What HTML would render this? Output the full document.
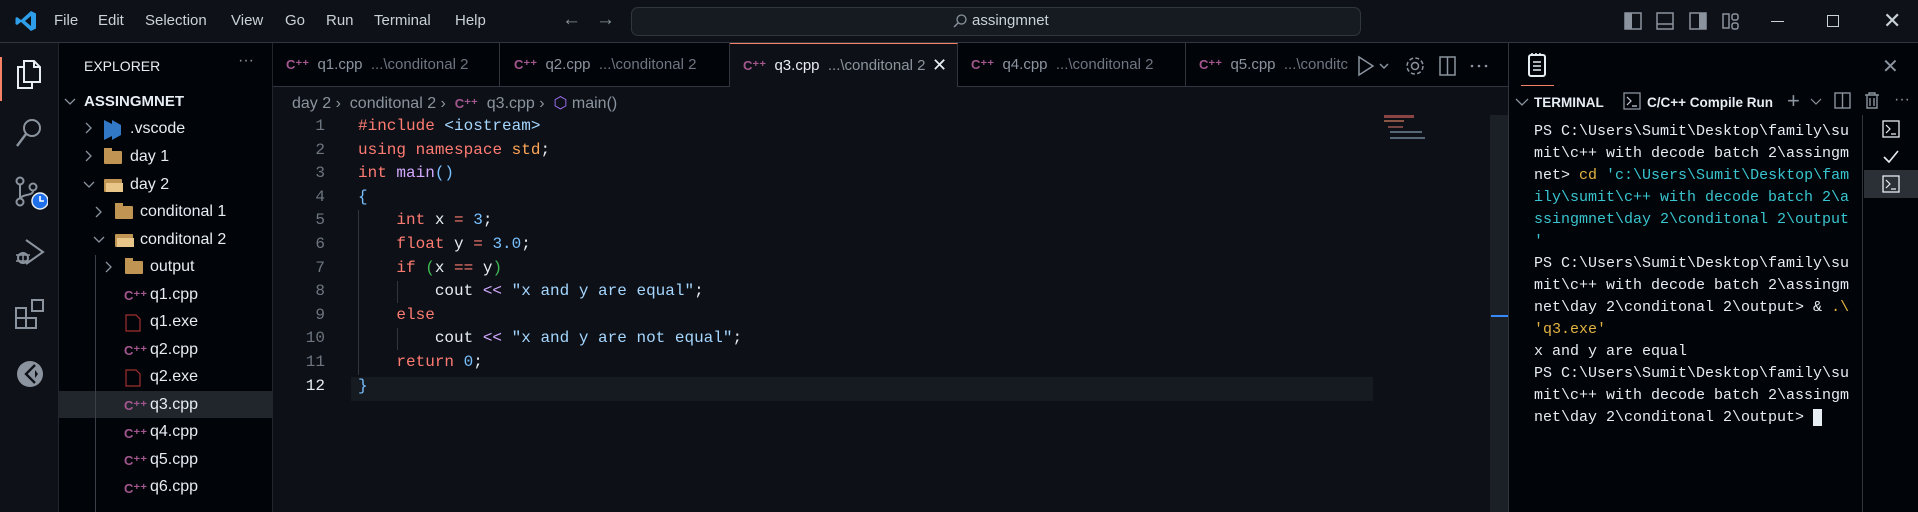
<!DOCTYPE html>
<html><head><meta charset="utf-8"><style>
*{margin:0;padding:0;box-sizing:border-box}
body{width:1918px;height:512px;overflow:hidden;background:#0d1117;font-family:"Liberation Sans",sans-serif;color:#e6edf3;position:relative}
.a{position:absolute;white-space:pre}
.mono{font-family:"Liberation Mono",monospace}
#title{left:0;top:0;width:1918px;height:43px;background:#0e1117;border-bottom:1px solid #30363d}
.menu{top:12px;font-size:15px;color:#c9d1d9}
#act{left:0;top:43px;width:59px;height:469px;background:#0e1117;border-right:1px solid #21262d}
#side{left:59px;top:43px;width:214px;height:469px;background:#010409;border-right:1px solid #21262d}
.row{font-size:16px;color:#e6edf3;height:27.5px;line-height:27.5px}
#tabs{left:273px;top:43px;width:1235px;height:44px;background:#010409;border-bottom:1px solid #30363d}
.tab{top:0;height:43px;border-right:1px solid #30363d;font-size:15px;line-height:43px;color:#8b949e;overflow:hidden;white-space:pre}
.cpp{color:#a4578f;font-weight:bold;font-size:13px}
.code{font-size:16px;line-height:23.6px;left:358px}
.ln{font-size:16px;line-height:23.6px;color:#6e7681;text-align:right;width:60px;left:265px}
.k{color:#ff7b72}.s{color:#a5d6ff}.n{color:#79c0ff}.f{color:#d2a8ff}.o{color:#ffa657}.g{color:#3fb950}
#panel{left:1508px;top:43px;width:410px;height:469px;background:#010409;border-left:1px solid #30363d}
.term{font-size:15px;line-height:22px;left:1534px;top:121px;color:#e6edf3}
.y{color:#e3b341}.c{color:#39c5cf}
</style></head><body>
<div id="title" class="a"></div>
<svg class="a" style="left:14px;top:9px" width="24" height="24" viewBox="0 0 24 24"><path d="M17 2 L22 4.5 V19.5 L17 22 L7 13 L3 16 L1.5 15 V9 L3 8 L7 11 Z M17 7 L11 12 L17 17 Z" fill="#2f9ee8"/></svg>
<div class="a menu" style="left:54px">File</div>
<div class="a menu" style="left:98px">Edit</div>
<div class="a menu" style="left:145px">Selection</div>
<div class="a menu" style="left:231px">View</div>
<div class="a menu" style="left:285px">Go</div>
<div class="a menu" style="left:326px">Run</div>
<div class="a menu" style="left:374px">Terminal</div>
<div class="a menu" style="left:455px">Help</div>
<div class="a" style="left:562px;top:9px;font-size:19px;color:#8b949e">←</div>
<div class="a" style="left:596px;top:9px;font-size:19px;color:#8b949e">→</div>
<div class="a" style="left:631px;top:7px;width:730px;height:29px;background:#161b22;border:1px solid #30363d;border-radius:7px"></div>
<svg class="a" style="left:952px;top:13px" width="16" height="16" viewBox="0 0 16 16"><circle cx="9.5" cy="6.5" r="4.5" stroke="#8b949e" fill="none" stroke-width="1.3"/><path d="M6.3 9.7 L2 14" stroke="#8b949e" stroke-width="1.4"/></svg>
<div class="a" style="left:972px;top:12px;font-size:15px;color:#c9d1d9">assingmnet</div>
<svg class="a" style="left:1624px;top:12px" width="120" height="20" viewBox="0 0 120 20"><rect x="1" y="1" width="16" height="16" fill="none" stroke="#8b949e" stroke-width="1.5"/><rect x="1" y="1" width="7" height="16" fill="#8b949e"/><rect x="33" y="1" width="16" height="16" fill="none" stroke="#8b949e" stroke-width="1.5"/><path d="M33 12 H49" stroke="#8b949e" stroke-width="1.5"/><rect x="66" y="1" width="16" height="16" fill="none" stroke="#8b949e" stroke-width="1.5"/><rect x="75" y="1" width="7" height="16" fill="#8b949e"/><rect x="99" y="2" width="6" height="14" fill="none" stroke="#8b949e" stroke-width="1.5"/><rect x="108" y="2" width="6" height="6" rx="2" fill="none" stroke="#8b949e" stroke-width="1.5"/><rect x="108" y="11" width="6" height="6" rx="2" fill="none" stroke="#8b949e" stroke-width="1.5"/></svg>
<div class="a" style="left:1771px;top:21px;width:13px;height:1px;background:#c9d1d9"></div>
<div class="a" style="left:1827px;top:15px;width:12px;height:12px;border:1px solid #c9d1d9"></div>
<div class="a" style="left:1883px;top:8px;font-size:22px;color:#c9d1d9">✕</div>

<div id="act" class="a"></div>
<div class="a" style="left:0;top:57px;width:2px;height:44px;background:#f78166"></div>
<svg class="a" style="left:14px;top:58px" width="30" height="32" viewBox="0 0 30 32"><path d="M10 3 H20 L26 9 V24 H10 Z M20 3 V9 H26" fill="none" stroke="#e6edf3" stroke-width="2"/><path d="M10 9 H4 V30 H18 V24" fill="none" stroke="#e6edf3" stroke-width="2"/></svg>
<svg class="a" style="left:14px;top:117px" width="30" height="32" viewBox="0 0 30 32"><circle cx="18" cy="11" r="8" fill="none" stroke="#8b949e" stroke-width="2"/><path d="M12 17 L3 29" stroke="#8b949e" stroke-width="2.4"/></svg>
<svg class="a" style="left:12px;top:176px" width="36" height="36" viewBox="0 0 36 36"><circle cx="8" cy="5" r="3.5" fill="none" stroke="#8b949e" stroke-width="2"/><circle cx="8" cy="26" r="3.5" fill="none" stroke="#8b949e" stroke-width="2"/><circle cx="21" cy="11" r="3.5" fill="none" stroke="#8b949e" stroke-width="2"/><path d="M8 9 V22 M21 15 C21 20 10 18 9 22" fill="none" stroke="#8b949e" stroke-width="2"/><circle cx="28" cy="25" r="8" fill="#1f6feb" stroke="#e6edf3" stroke-width="1.5"/><path d="M28 20 V25 H32" stroke="#fff" stroke-width="1.6" fill="none"/></svg>
<svg class="a" style="left:13px;top:237px" width="34" height="32" viewBox="0 0 34 32"><path d="M13 3 L30 15 L13 27" fill="none" stroke="#8b949e" stroke-width="2"/><circle cx="10" cy="21" r="5" fill="none" stroke="#8b949e" stroke-width="2"/><path d="M3 18 H17 M3 24 H17 M10 16 V26" stroke="#8b949e" stroke-width="1.5"/></svg>
<svg class="a" style="left:14px;top:298px" width="32" height="32" viewBox="0 0 32 32"><path d="M2 10 H12 V30 H2 Z M2 20 H22 V30 H12" fill="none" stroke="#8b949e" stroke-width="2"/><rect x="18" y="2" width="11" height="11" fill="none" stroke="#8b949e" stroke-width="2"/></svg>
<svg class="a" style="left:15px;top:359px" width="30" height="30" viewBox="0 0 30 30"><circle cx="15" cy="15" r="13" fill="#8b949e"/><path d="M20 6 L11 15 L20 24" fill="none" stroke="#0e1117" stroke-width="2.4"/><path d="M20 11 L23 15 L20 19 Z" fill="#0e1117"/></svg>

<div id="side" class="a"></div>
<div class="a" style="left:84px;top:58px;font-size:14px;color:#e6edf3">EXPLORER</div>
<div class="a" style="left:238px;top:52px;font-size:16px;color:#8b949e">···</div>
<svg class="a" style="left:64px;top:97px" width="14" height="10"><path d="M1 2 L6 7 L11 2" fill="none" stroke="#8b949e" stroke-width="1.3"/></svg>
<div class="a" style="left:84px;top:93px;font-size:15px;font-weight:bold">ASSINGMNET</div>
<div class="a" style="left:59px;top:391px;width:213px;height:27px;background:#21262d"></div>
<div class="a" style="left:95px;top:255px;width:1px;height:257px;background:#3b4048"></div>
<svg class="a" style="left:0;top:0" width="273" height="512">
<g fill="none" stroke="#8b949e" stroke-width="1.3">
<path d="M86 123 L91 128 L86 133"/><path d="M86 151 L91 156 L86 161"/><path d="M84 182 L89 187 L94 182"/>
<path d="M96 207 L101 212 L96 217"/><path d="M94 237 L99 242 L104 237"/><path d="M106 262 L111 267 L106 272"/></g>
<path d="M104 120 L112 124 V136 L104 140 Z M112 120 L121 125 V135 L112 140 Z" fill="#3178c6"/>
<rect x="104" y="151" width="18" height="13" rx="1" fill="#c09553"/><rect x="104" y="148" width="8" height="4" fill="#c09553"/>
<rect x="104" y="179" width="18" height="13" rx="1" fill="#c09553"/><rect x="106" y="183" width="17" height="9" fill="#e8c588"/>
<rect x="115" y="206" width="18" height="13" rx="1" fill="#c09553"/><rect x="115" y="203" width="8" height="4" fill="#c09553"/>
<rect x="115" y="234" width="18" height="13" rx="1" fill="#c09553"/><rect x="117" y="238" width="17" height="9" fill="#e8c588"/>
<rect x="125" y="261" width="18" height="13" rx="1" fill="#c09553"/><rect x="125" y="258" width="8" height="4" fill="#c09553"/>
<g fill="none" stroke="#a03030" stroke-width="1.2"><path d="M126 315 H136 L140 319 V331 H126 Z"/><path d="M126 370 H136 L140 374 V386 H126 Z"/></g>
</svg>
<div class="a cpp" style="left:124px;top:288px">C⁺⁺</div>
<div class="a cpp" style="left:124px;top:343px">C⁺⁺</div>
<div class="a cpp" style="left:124px;top:398px">C⁺⁺</div>
<div class="a cpp" style="left:124px;top:426px">C⁺⁺</div>
<div class="a cpp" style="left:124px;top:453px">C⁺⁺</div>
<div class="a cpp" style="left:124px;top:481px">C⁺⁺</div>
<div class="a row" style="left:130px;top:115px">.vscode</div>
<div class="a row" style="left:130px;top:143px">day 1</div>
<div class="a row" style="left:130px;top:171px">day 2</div>
<div class="a row" style="left:140px;top:198px">conditonal 1</div>
<div class="a row" style="left:140px;top:226px">conditonal 2</div>
<div class="a row" style="left:150px;top:253px">output</div>
<div class="a row" style="left:150px;top:281px">q1.cpp</div>
<div class="a row" style="left:150px;top:308px">q1.exe</div>
<div class="a row" style="left:150px;top:336px">q2.cpp</div>
<div class="a row" style="left:150px;top:363px">q2.exe</div>
<div class="a row" style="left:150px;top:391px">q3.cpp</div>
<div class="a row" style="left:150px;top:418px">q4.cpp</div>
<div class="a row" style="left:150px;top:446px">q5.cpp</div>
<div class="a row" style="left:150px;top:473px">q6.cpp</div>

<div id="tabs" class="a"></div>
<div class="a tab" style="left:273px;top:43px;width:227px"><span class="cpp" style="margin-left:13px">C⁺⁺</span>  <span style="color:#8b949e">q1.cpp</span>  <span style="color:#6e7681">...\conditonal 2</span></div>
<div class="a tab" style="left:500px;top:43px;width:230px"><span class="cpp" style="margin-left:14px">C⁺⁺</span>  <span>q2.cpp</span>  <span style="color:#6e7681">...\conditonal 2</span></div>
<div class="a tab" style="left:730px;top:43px;width:228px;height:44px;background:#0d1117;border-top:1px solid #f78166"><span class="cpp" style="margin-left:13px">C⁺⁺</span>  <span style="color:#e6edf3">q3.cpp</span>  <span style="color:#8b949e">...\conditonal 2</span></div>
<div class="a" style="left:932px;top:55px;font-size:18px;color:#e6edf3">✕</div>
<div class="a tab" style="left:958px;top:43px;width:228px"><span class="cpp" style="margin-left:13px">C⁺⁺</span>  <span>q4.cpp</span>  <span style="color:#6e7681">...\conditonal 2</span></div>
<div class="a tab" style="left:1186px;top:43px;width:165px;border-right:none"><span class="cpp" style="margin-left:13px">C⁺⁺</span>  <span>q5.cpp</span>  <span style="color:#6e7681">...\conditc</span></div>
<svg class="a" style="left:1355px;top:53px" width="150" height="26" viewBox="0 0 150 26">
<g fill="none" stroke="#8b949e" stroke-width="1.5"><path d="M4 4 L18 13 L4 22 Z"/><path d="M25 11 L29 15 L33 11"/>
<circle cx="60" cy="13" r="3.5"/><circle cx="60" cy="13" r="8" stroke-dasharray="4 2.3"/>
<rect x="85" y="4" width="15" height="18"/><path d="M92.5 4 V22"/></g>
<g fill="#8b949e"><circle cx="117" cy="13" r="1.3"/><circle cx="124" cy="13" r="1.3"/><circle cx="131" cy="13" r="1.3"/></g></svg>

<div class="a" style="left:292px;top:93px;font-size:16px;color:#8b949e">day 2 ›  conditonal 2 ›  <span class="cpp">C⁺⁺</span>  q3.cpp ›  <span style="color:#a371f7">⬡</span> main()</div>
<div class="a" style="left:351px;top:377px;width:1022px;height:24px;background:#161b22"></div>
<div class="a" style="left:358px;top:210px;width:1px;height:165px;background:#30363d"></div>
<div class="a" style="left:397px;top:281px;width:1px;height:22px;background:#30363d"></div>
<div class="a" style="left:397px;top:328px;width:1px;height:22px;background:#30363d"></div>
<div class="a ln mono" style="top:115px">1
2
3
4
5
6
7
8
9
10
11
<span style="color:#e6edf3">12</span></div>
<div class="a code mono" style="top:115px"><span class="k">#include</span> <span class="s">&lt;iostream&gt;</span>
<span class="k">using</span> <span class="k">namespace</span> <span class="o">std</span>;
<span class="k">int</span> <span class="f">main</span><span class="n">()</span>
<span class="n">{</span>
    <span class="k">int</span> x <span class="k">=</span> <span class="n">3</span>;
    <span class="k">float</span> y <span class="k">=</span> <span class="n">3.0</span>;
    <span class="k">if</span> <span class="g">(</span>x <span class="k">==</span> y<span class="g">)</span>
        cout <span class="f">&lt;&lt;</span> <span class="s">"x and y are equal"</span>;
    <span class="k">else</span>
        cout <span class="f">&lt;&lt;</span> <span class="s">"x and y are not equal"</span>;
    <span class="k">return</span> <span class="n">0</span>;
<span class="n">}</span></div>
<div class="a" style="left:1384px;top:115px;width:30px;height:3px;background:#8a4444"></div>
<div class="a" style="left:1384px;top:120px;width:20px;height:2px;background:#8a5544"></div>
<div class="a" style="left:1388px;top:126px;width:15px;height:2px;background:#774444"></div>
<div class="a" style="left:1390px;top:131px;width:32px;height:2px;background:#556677"></div>
<div class="a" style="left:1390px;top:137px;width:35px;height:2px;background:#556677"></div>
<div class="a" style="left:1490px;top:115px;width:18px;height:397px;background:#1b1f26"></div>
<div class="a" style="left:1491px;top:315px;width:17px;height:2px;background:#388bfd"></div>

<div id="panel" class="a"></div>
<svg class="a" style="left:1526px;top:52px" width="24" height="26" viewBox="0 0 24 26"><rect x="3" y="3" width="16" height="21" rx="2" fill="none" stroke="#e6edf3" stroke-width="2"/><path d="M7 10 H15 M7 14 H15 M7 18 H15 M6 1 V4 M10 1 V4 M14 1 V4" stroke="#e6edf3" stroke-width="1.6"/></svg>
<div class="a" style="left:1521px;top:85px;width:33px;height:1px;background:#f78166"></div>
<div class="a" style="left:1882px;top:54px;font-size:20px;color:#8b949e">✕</div>
<svg class="a" style="left:1515px;top:97px" width="14" height="10"><path d="M1 2 L7 8 L13 2" fill="none" stroke="#8b949e" stroke-width="1.3"/></svg>
<div class="a" style="left:1534px;top:95px;font-size:13.5px;font-weight:bold">TERMINAL</div>
<svg class="a" style="left:1623px;top:92px" width="18" height="18"><rect x="1" y="1" width="16" height="16" fill="none" stroke="#8b949e" stroke-width="1.3"/><path d="M4 5 L8 9 L4 13 M9 14 H14" fill="none" stroke="#c9d1d9" stroke-width="1.2"/></svg>
<div class="a" style="left:1647px;top:95px;font-size:13.5px;font-weight:bold">C/C++ Compile Run</div>
<div class="a" style="left:1787px;top:88px;font-size:22px;color:#8b949e">+</div>
<svg class="a" style="left:1810px;top:98px" width="12" height="8"><path d="M1 1 L6 6 L11 1" fill="none" stroke="#8b949e" stroke-width="1.2"/></svg>
<svg class="a" style="left:1834px;top:92px" width="18" height="18"><rect x="1" y="1" width="15" height="15" fill="none" stroke="#8b949e" stroke-width="1.4"/><path d="M8.5 1 V16" stroke="#8b949e" stroke-width="1.4"/></svg>
<svg class="a" style="left:1864px;top:91px" width="16" height="19"><path d="M1 4 H15 M5 4 V2 H11 V4 M3 4 V17 H13 V4 M6 7 V15 M10 7 V15" fill="none" stroke="#8b949e" stroke-width="1.4"/></svg>
<div class="a" style="left:1894px;top:91px;font-size:16px;color:#8b949e">···</div>
<div class="a" style="left:1862px;top:115px;width:1px;height:397px;background:#30363d"></div>
<div class="a" style="left:1864px;top:170px;width:54px;height:28px;background:#2b2f36"></div>
<svg class="a" style="left:1882px;top:120px" width="18" height="18"><rect x="1" y="1" width="16" height="16" fill="none" stroke="#e6edf3" stroke-width="1.3"/><path d="M4 5 L8 9 L4 13 M9 14 H14" fill="none" stroke="#e6edf3" stroke-width="1.2"/></svg>
<svg class="a" style="left:1882px;top:149px" width="18" height="16"><path d="M2 8 L7 13 L16 2" fill="none" stroke="#e6edf3" stroke-width="1.6"/></svg>
<svg class="a" style="left:1882px;top:175px" width="18" height="18"><rect x="1" y="1" width="16" height="16" fill="none" stroke="#e6edf3" stroke-width="1.3"/><path d="M4 5 L8 9 L4 13 M9 14 H14" fill="none" stroke="#e6edf3" stroke-width="1.2"/></svg>
<div class="a term mono">PS C:\Users\Sumit\Desktop\family\su
mit\c++ with decode batch 2\assingm
net&gt; <span class="y">cd</span> <span class="c">'c:\Users\Sumit\Desktop\fam
ily\sumit\c++ with decode batch 2\a
ssingmnet\day 2\conditonal 2\output
'</span>
PS C:\Users\Sumit\Desktop\family\su
mit\c++ with decode batch 2\assingm
net\day 2\conditonal 2\output&gt; &amp; <span class="y">.\
'q3.exe'</span>
x and y are equal
PS C:\Users\Sumit\Desktop\family\su
mit\c++ with decode batch 2\assingm
net\day 2\conditonal 2\output&gt; <span style="background:#e6edf3"> </span></div>
</body></html>
